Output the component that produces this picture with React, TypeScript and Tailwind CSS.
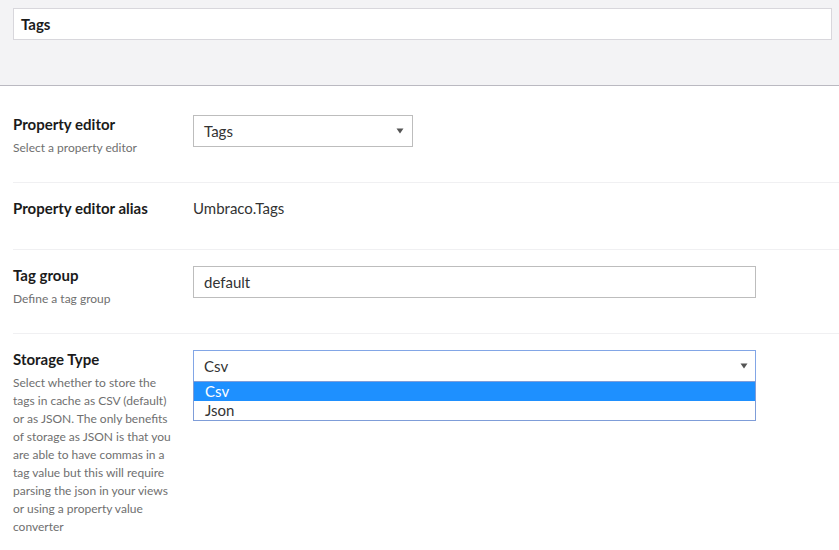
import React from "react";

const font = { fontFamily: "Lato, 'Open Sans', sans-serif" };

function Caret() {
    return (
        <svg width="8" height="6" viewBox="0 0 8 6" className="shrink-0">
            <path d="M0.5 0.5 L7.5 0.5 L4 5.5 Z" fill="#555555" />
        </svg>
    );
}

function Row({
    label,
    description,
    children,
    last,
    pb = "pb-[25px]",
}: {
    label: string;
    description?: string;
    children: React.ReactNode;
    last?: boolean;
    pb?: string;
}) {
    return (
        <div className={`flex pt-[16px] ${pb} ${last ? "" : "border-b border-[#f0f0f2]"}`}>
            <div className="w-[180px] shrink-0">
                <div className="text-[15px] leading-[18px] font-bold text-[#1b1b1b]">{label}</div>
                {description && (
                    <div className="mt-[6px] w-[160px] text-[12px] leading-[18px] text-[#6f6f6f]">{description}</div>
                )}
            </div>
            <div className="flex-1">{children}</div>
        </div>
    );
}

export default function App() {
    return (
        <div className="min-h-screen bg-white" style={font}>
            {/* Header */}
            <div className="h-[86px] bg-[#f3f3f5] border-b border-[#bab9c1] pl-[13px] pr-[7px] pt-[8px]">
                <div className="h-[32px] bg-white border border-[#d8d7dc] flex items-center pl-[7px]">
                    <span className="text-[15px] font-bold text-[#1b1b1b]">Tags</span>
                </div>
            </div>

            <div className="pl-[13px] pt-[13px]">
                <Row label="Property editor" description="Select a property editor">
                    <div className="w-[220px] h-[32px] border border-[#bdbdbd] flex items-center justify-between pl-[10px] pr-[8px]">
                        <span className="text-[15px] text-[#333333]">Tags</span>
                        <Caret />
                    </div>
                </Row>

                <Row label="Property editor alias" pb="pb-[32px]">
                    <div className="text-[15px] leading-[18px] text-[#333333]">Umbraco.Tags</div>
                </Row>

                <Row label="Tag group" description="Define a tag group">
                    <div className="w-[563px] h-[32px] border border-[#bdbdbd] flex items-center pl-[10px]">
                        <span className="text-[15px] text-[#333333]">default</span>
                    </div>
                </Row>

                <Row
                    last
                    label="Storage Type"
                    description="Select whether to store the tags in cache as CSV (default) or as JSON. The only benefits of storage as JSON is that you are able to have commas in a tag value but this will require parsing the json in your views or using a property value converter"
                >
                    <div className="relative w-[563px]">
                        <div className="h-[32px] border border-[#82a6e6] flex items-center justify-between pl-[10px] pr-[7px]">
                            <span className="text-[15px] text-[#333333]">Csv</span>
                            <Caret />
                        </div>
                        <div className="absolute left-0 top-[31px] w-full bg-white border border-[#7f9dd8] text-[15px] leading-[19px]">
                            <div className="bg-[#1e90ff] text-white pl-[11px]">Csv</div>
                            <div className="text-[#333333] pl-[11px]">Json</div>
                        </div>
                    </div>
                </Row>
            </div>
        </div>
    );
}
